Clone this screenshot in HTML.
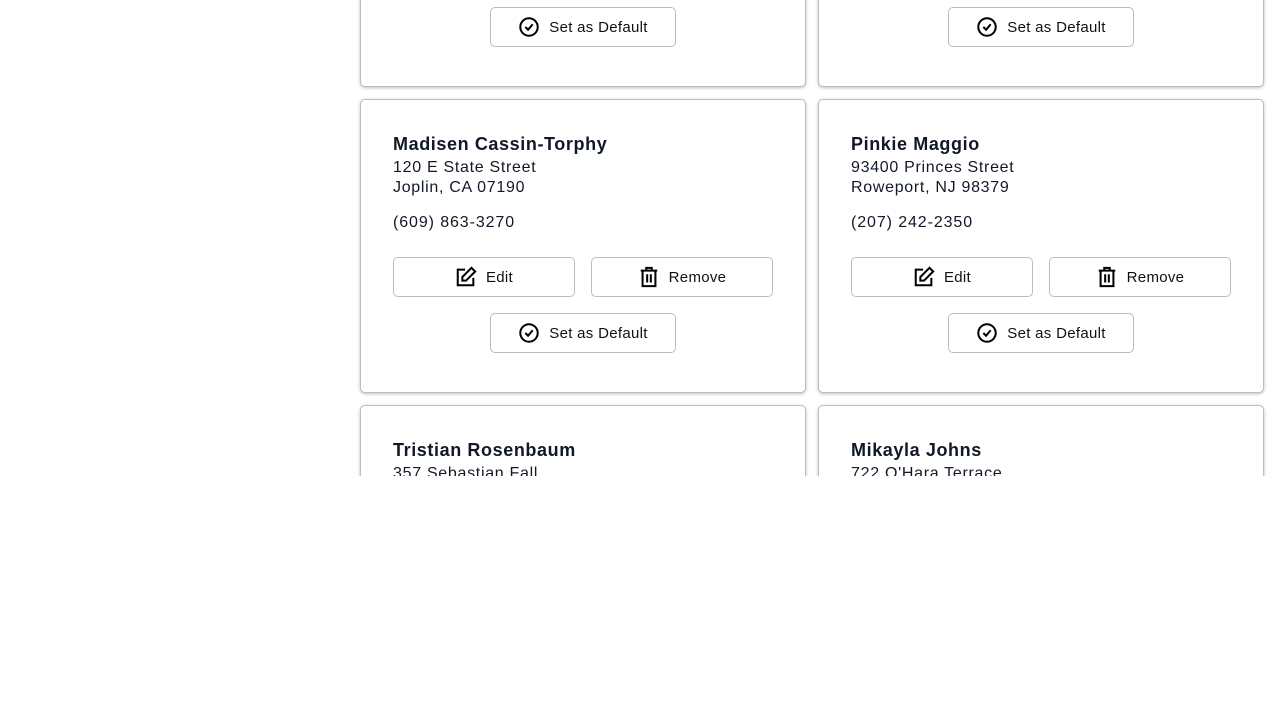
<!DOCTYPE html>
<html><head><style>
*{box-sizing:border-box;margin:0;padding:0}
body{width:1280px;height:720px;background:#fff;font-family:"Liberation Sans",sans-serif;color:#111827;position:relative;overflow:hidden}
.clip{position:absolute;left:0;top:0;width:1280px;height:476px;overflow:hidden}
.card{position:absolute;width:446px;height:294px;border:1px solid #bdbdbd;border-radius:5px;box-shadow:0 1px 3px rgba(0,0,0,.25);background:#fff}
.name{position:absolute;left:32px;top:34px;font-size:18px;font-weight:bold;color:#111827;letter-spacing:0.6px}
.addr{position:absolute;left:32px;top:58px;font-size:16px;line-height:20px;letter-spacing:0.7px}
.phone{position:absolute;left:32px;top:114px;font-size:16px;letter-spacing:0.9px}
.btn{position:absolute;height:40px;border:1px solid #bdbdbd;border-radius:5px;display:flex;align-items:center;justify-content:center;gap:9px;font-size:15px;color:#111;letter-spacing:0.3px}
.btn svg{width:22px;height:22px}
.e{left:32px;top:157px;width:182px}
.r{left:230px;top:157px;width:182px}
.d{left:129px;top:213px;width:186px}
</style></head><body><div class="clip">
<div class="card" style="left:360px;top:-207px">
<div class="btn d"><svg viewBox="0 0 24 24" fill="none" stroke="#000" stroke-width="2.2"><circle cx="12" cy="12" r="9.5"/><path d="M8 12l3 3 5-6"/></svg>Set as Default</div></div>
<div class="card" style="left:818px;top:-207px">
<div class="btn d"><svg viewBox="0 0 24 24" fill="none" stroke="#000" stroke-width="2.2"><circle cx="12" cy="12" r="9.5"/><path d="M8 12l3 3 5-6"/></svg>Set as Default</div></div>

<div class="card" style="left:360px;top:99px">
<div class="name">Madisen Cassin-Torphy</div>
<div class="addr">120 E State Street<br>Joplin, CA 07190</div>
<div class="phone">(609) 863-3270</div>
<div class="btn e"><svg viewBox="0 0 24 24" fill="none" stroke="#000" stroke-width="2.2"><path d="M11 4H3v17h17v-8"/><path d="M18 2l4 4-10 10H8v-4z"/></svg>Edit</div>
<div class="btn r"><svg viewBox="0 0 24 24" fill="none" stroke="#000" stroke-width="2.2"><path d="M3 5h18M9 5V2h6v3M5 5v17h14V5M10 9v9M14 9v9"/></svg>Remove</div>
<div class="btn d"><svg viewBox="0 0 24 24" fill="none" stroke="#000" stroke-width="2.2"><circle cx="12" cy="12" r="9.5"/><path d="M8 12l3 3 5-6"/></svg>Set as Default</div></div>

<div class="card" style="left:818px;top:99px">
<div class="name">Pinkie Maggio</div>
<div class="addr">93400 Princes Street<br>Roweport, NJ 98379</div>
<div class="phone">(207) 242-2350</div>
<div class="btn e"><svg viewBox="0 0 24 24" fill="none" stroke="#000" stroke-width="2.2"><path d="M11 4H3v17h17v-8"/><path d="M18 2l4 4-10 10H8v-4z"/></svg>Edit</div>
<div class="btn r"><svg viewBox="0 0 24 24" fill="none" stroke="#000" stroke-width="2.2"><path d="M3 5h18M9 5V2h6v3M5 5v17h14V5M10 9v9M14 9v9"/></svg>Remove</div>
<div class="btn d"><svg viewBox="0 0 24 24" fill="none" stroke="#000" stroke-width="2.2"><circle cx="12" cy="12" r="9.5"/><path d="M8 12l3 3 5-6"/></svg>Set as Default</div></div>

<div class="card" style="left:360px;top:405px">
<div class="name">Tristian Rosenbaum</div>
<div class="addr">357 Sebastian Fall<br>&nbsp;</div></div>
<div class="card" style="left:818px;top:405px">
<div class="name">Mikayla Johns</div>
<div class="addr">722 O'Hara Terrace<br>&nbsp;</div></div>
</div></body></html>
